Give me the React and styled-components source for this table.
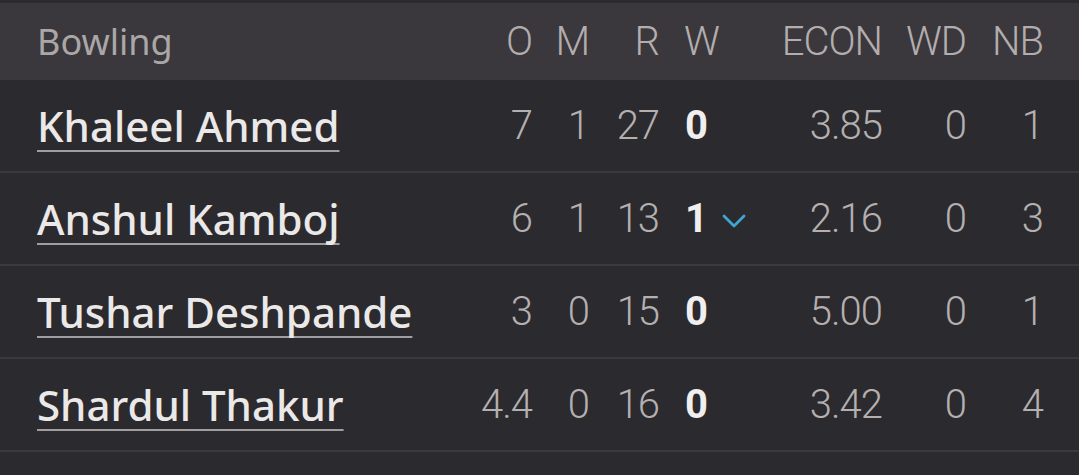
import React from 'react'
import { styled, createGlobalStyle } from 'styled-components';

const bowlers = [
  { name: 'Khaleel Ahmed', o: '7', m: '1', r: '27', w: '0', econ: '3.85', wd: '0', nb: '1' },
  { name: 'Anshul Kamboj', o: '6', m: '1', r: '13', w: '1', econ: '2.16', wd: '0', nb: '3', open: true },
  { name: 'Tushar Deshpande', o: '3', m: '0', r: '15', w: '0', econ: '5.00', wd: '0', nb: '1' },
  { name: 'Shardul Thakur', o: '4.4', m: '0', r: '16', w: '0', econ: '3.42', wd: '0', nb: '4' },
];

const Chevron = () => (
  <svg width="24" height="14" viewBox="0 0 24 14" fill="none">
    <path d="M2 2 L12 12 L22 2" stroke="#3ea6d2" strokeWidth="2.8" strokeLinecap="round" strokeLinejoin="round" />
  </svg>
);

const App = () => {
  return (
    <Wrapper>
      <GlobalStyle />
      <Header>
        <Title>Bowling</Title>
        <HeadCell>O</HeadCell>
        <HeadCell>M</HeadCell>
        <HeadCell>R</HeadCell>
        <HeadCell $left>W</HeadCell>
        <HeadCell>ECON</HeadCell>
        <HeadCell>WD</HeadCell>
        <HeadCell>NB</HeadCell>
      </Header>
      {bowlers.map((b) => (
        <Row key={b.name}>
          <Name><a>{b.name}</a></Name>
          <Stat>{b.o}</Stat>
          <Stat>{b.m}</Stat>
          <Stat>{b.r}</Stat>
          <Wickets>
            {b.w}
            {b.open && <Chevron />}
          </Wickets>
          <Stat>{b.econ}</Stat>
          <Stat>{b.wd}</Stat>
          <Stat>{b.nb}</Stat>
        </Row>
      ))}
    </Wrapper>
  )
}

export default App;

const GlobalStyle = createGlobalStyle`
  html, body {
    margin: 0;
    background: #2b2a2f;
  }
`

const Wrapper = styled.div`
  width: 1079px;
  height: 475px;
  padding-top: 3px;
  box-sizing: border-box;
  background: #2b2a2f;
  overflow: hidden;
`

const grid = `
  display: grid;
  grid-template-columns: 1fr 82px 57px 70px 110px 113px 84px 77px;
  align-items: center;
  padding: 0 36px 0 37px;
`

const Header = styled.div`
  ${grid}
  box-sizing: border-box;
  height: 77px;
  background: #3a383c;
`

const Title = styled.div`
  font-family: "Noto Sans", sans-serif;
  font-size: 36px;
  color: #aba6a7;
`

const HeadCell = styled.div`
  font-family: Roboto, sans-serif;
  font-size: 40px;
  font-weight: 300;
  letter-spacing: -1px;
  color: #b3adae;
  text-align: ${(p) => (p.$left ? 'left' : 'right')};
  padding-left: ${(p) => (p.$left ? '25px' : '0')};
`

const Row = styled.div`
  ${grid}
  box-sizing: content-box;
  height: 91px;
  border-top: 2px solid #3a393e;
  &:nth-child(2) {
    border-top: none;
  }
  &:last-child {
    border-bottom: 2px solid #3a393e;
  }
`

const Name = styled.div`
  font-family: "Noto Sans", sans-serif;
  font-size: 42px;
  font-weight: 500;
  color: #ebe8e8;
  a {
    text-decoration: underline;
    text-decoration-color: #a29e9f;
    text-decoration-thickness: 2px;
    text-decoration-skip-ink: none;
    text-underline-offset: 8px;
  }
`

const Stat = styled.div`
  font-family: Roboto, sans-serif;
  font-size: 40px;
  font-weight: 300;
  letter-spacing: -1px;
  color: #b5b0af;
  text-align: right;
`

const Wickets = styled.div`
  display: flex;
  align-items: center;
  gap: 14px;
  padding-left: 26px;
  font-family: Roboto, sans-serif;
  font-size: 40px;
  font-weight: 700;
  color: #f1eeee;
  svg {
    margin-top: 4px;
  }
`
